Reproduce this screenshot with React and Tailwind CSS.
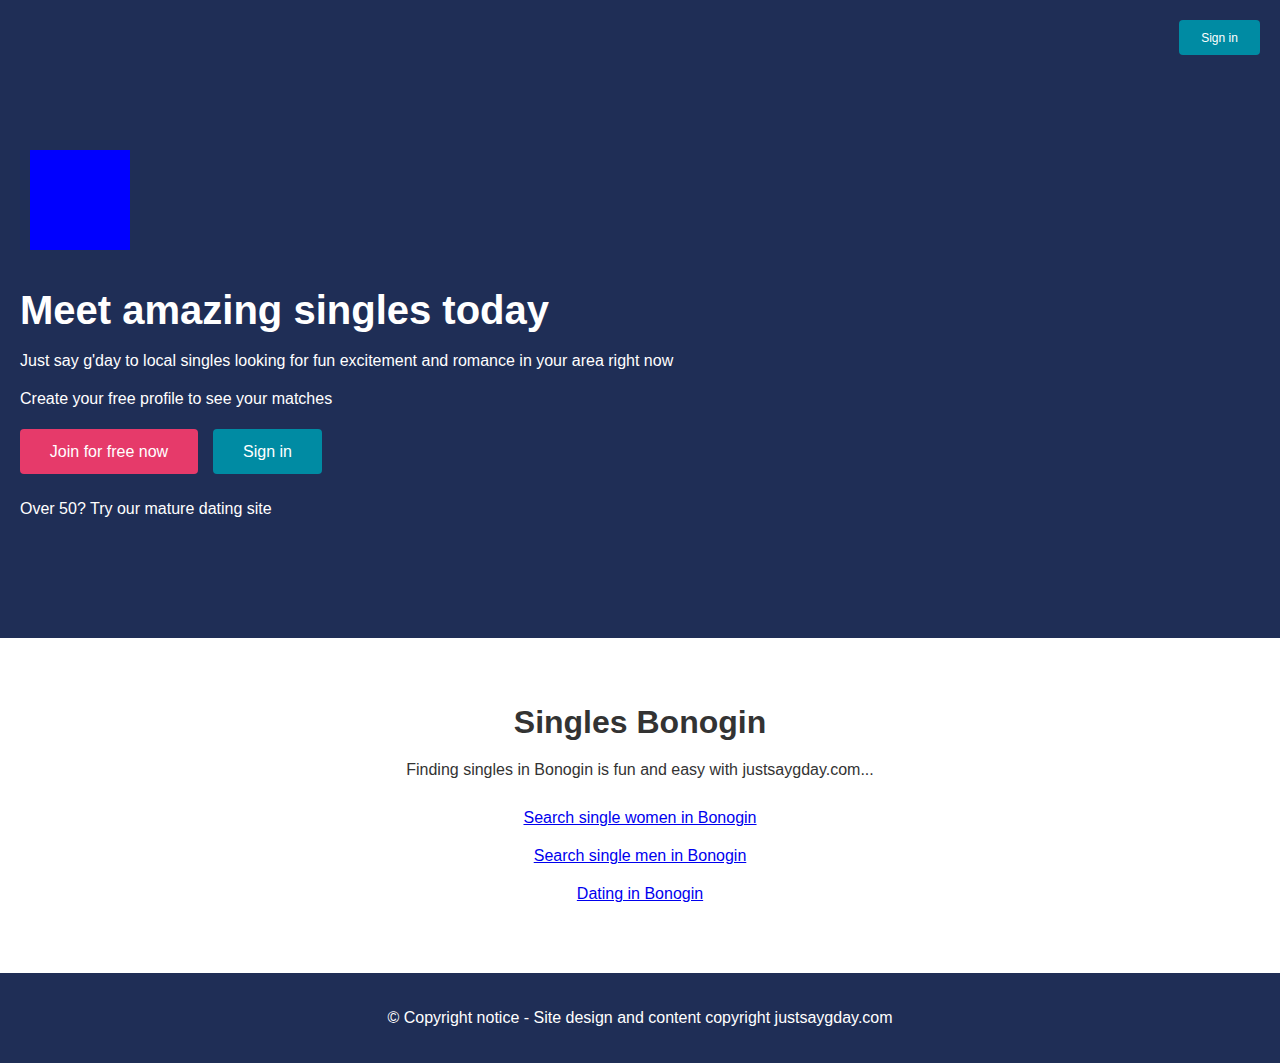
export default function App() {
  return (
    <div className="min-h-screen bg-white font-['Liberation_Sans',Arial,sans-serif] text-[16px]">
      {/* Hero */}
      <header className="h-[638px] bg-[#1f2e56] text-white flex flex-col px-5">
        <div className="flex justify-end pt-5">
          <button className="h-[35px] w-[81px] rounded bg-[#008ba3] text-[12px] text-white">
            Sign in
          </button>
        </div>
        <div className="pt-[95px]">
          <div className="ml-[10px] h-[100px] w-[100px] bg-[#0000ff]" />
          <h1 className="mt-[36px] text-[40px] leading-[48px] font-bold">
            Meet amazing singles today
          </h1>
          <p className="mt-[14px] leading-[26px]">
            Just say g'day to local singles looking for fun excitement and romance in your area right now
          </p>
          <p className="mt-3 leading-[26px]">Create your free profile to see your matches</p>
          <div className="mt-[17px] flex gap-[15px]">
            <button className="h-[45px] w-[178px] rounded bg-[#e63a6a] text-white">
              Join for free now
            </button>
            <button className="h-[45px] w-[109px] rounded bg-[#008ba3] text-white">
              Sign in
            </button>
          </div>
          <p className="mt-[22px] leading-[26px]">Over 50? Try our mature dating site</p>
        </div>
      </header>

      {/* Local section */}
      <section className="flex flex-col items-center pt-[64px] pb-[66px] text-[#333]">
        <h2 className="text-[32px] leading-[40px] font-bold">Singles Bonogin</h2>
        <p className="mt-[15px] leading-[26px]">
          Finding singles in Bonogin is fun and easy with justsaygday.com...
        </p>
        <div className="mt-[22px] flex flex-col items-center gap-3 leading-[26px]">
          <a href="#" className="text-[#0000ee] underline">Search single women in Bonogin</a>
          <a href="#" className="text-[#0000ee] underline">Search single men in Bonogin</a>
          <a href="#" className="text-[#0000ee] underline">Dating in Bonogin</a>
        </div>
      </section>

      {/* Footer */}
      <footer className="h-[90px] bg-[#1f2e56] flex items-center justify-center text-white">
        © Copyright notice - Site design and content copyright justsaygday.com
      </footer>
    </div>
  );
}
